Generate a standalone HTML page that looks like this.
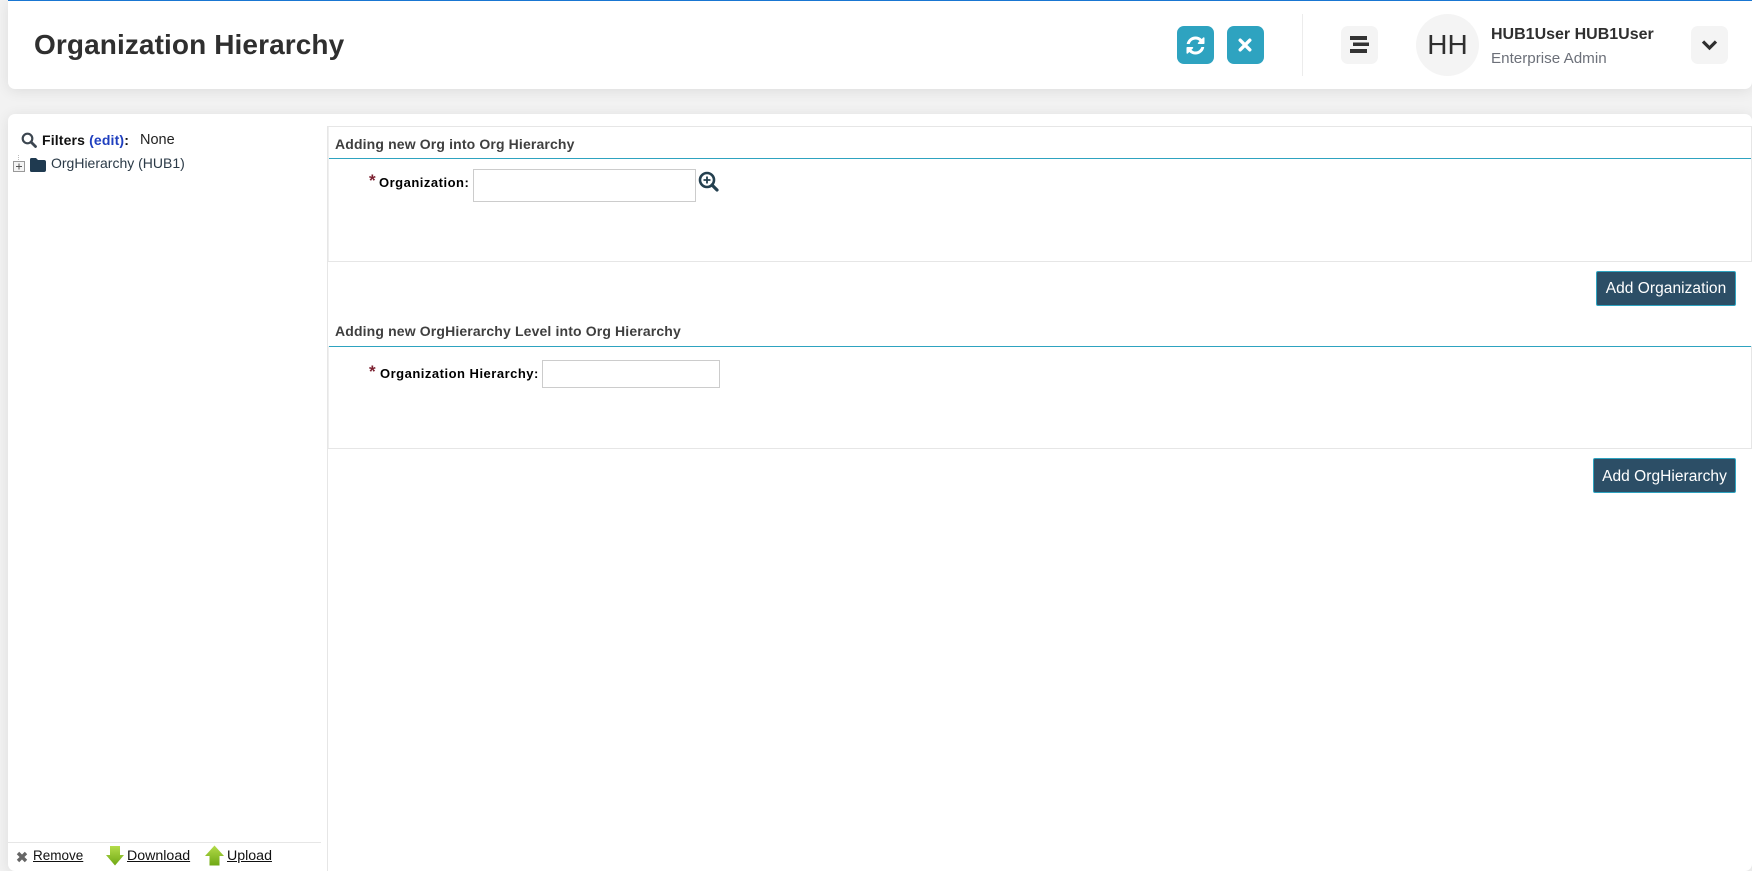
<!DOCTYPE html>
<html><head><meta charset="utf-8"><style>
html,body{margin:0;padding:0;width:1752px;height:871px;overflow:hidden;background:#f2f2f2;font-family:"Liberation Sans",Arial,sans-serif;color:#222}
.a{position:absolute;white-space:nowrap}
.card{position:absolute;background:#fff;box-shadow:0 2px 14px rgba(0,0,0,.09)}
.ln{position:absolute;background:#e6e6e6}
.teal{position:absolute;background:#2ea3c0;height:1px}
.btn{position:absolute;background:#f4f4f4;border-radius:7px;width:37px;height:38px;top:26px}
.tb{background:#2ea3c0}
.hd{font-size:14px;font-weight:bold;color:#3f3f3f;letter-spacing:.14px}
.lab{font-size:13px;font-weight:bold;color:#000;letter-spacing:.5px}
.star{color:#7b1f2f;font-weight:bold;font-size:17px}
.inp{position:absolute;box-sizing:border-box;background:#fff;border:1px solid #ccc}
.sub{position:absolute;box-sizing:border-box;background:#2c4e66;border:1px solid #2ea3c0;border-radius:2px;color:#fff;font-size:15.5px;letter-spacing:.05px;text-align:center;height:35px}
.ft{font-size:14.2px;color:#111;text-decoration:underline}
svg{position:absolute;display:block}
</style></head><body>
<div class="card" style="left:8px;top:0;width:1744px;height:89px;border-radius:0 0 7px 7px"></div>
<div class="a" style="left:8px;top:0;width:1744px;height:1px;background:#1976d2"></div>
<div class="a" style="left:34px;top:28px;font-size:28px;line-height:34px;font-weight:bold;color:#2f2f2f;letter-spacing:.1px">Organization Hierarchy</div>

<div class="btn tb" style="left:1177px"><svg style="left:8px;top:9px" width="21" height="21" viewBox="0 0 1792 1792"><path fill="#fff" d="M1639 1056q0 5-1 7-64 268-268 434.5t-478 166.5q-146 0-282.5-55t-243.500-157l-129 129q-19 19-45 19t-45-19-19-45v-448q0-26 19-45t45-19h448q26 0 45 19t19 45-19 45l-137 137q71 66 161 102t187 36q134 0 250-65t186-179q11-17 53-117 8-23 30-23h192q13 0 22.500 9.500t9.500 22.500zm25-800v448q0 26-19 45t-45 19h-448q-26 0-45-19t-19-45 19-45l138-138q-148-137-349-137-134 0-250 65t-186 179q-11 17-53 117-8 23-30 23h-199q-13 0-22.500-9.500t-9.500-22.500v-7q65-268 270-434.500t480-166.500q146 0 284 55.500t245 156.500l130-129q19-19 45-19t45 19 19 45z"/></svg></div>
<div class="btn tb" style="left:1227px"><svg style="left:11px;top:12px" width="14" height="14" viewBox="0 0 14 14"><path d="M2.200 2.200L11.800 11.800M11.800 2.200L2.200 11.800" stroke="#fff" stroke-width="3.400" stroke-linecap="round"/></svg></div>
<div class="ln" style="left:1302px;top:14px;width:1px;height:62px;background:#ececec"></div>
<div class="btn" style="left:1341px"><svg style="left:9px;top:10px" width="20" height="18" viewBox="0 0 20 18"><rect x="0" y="0" width="17" height="4" fill="#333"/><rect x="3" y="6.500" width="16" height="3.500" fill="#333"/><rect x="0" y="13" width="17" height="4" fill="#333"/></svg></div>
<div class="a" style="left:1416px;top:14px;width:63px;height:62px;border-radius:50%;background:#f4f4f4;text-align:center;line-height:62px;font-size:28px;color:#2f2f2f">HH</div>
<div class="a" style="left:1491px;top:25px;font-size:16px;line-height:20px;font-weight:bold;color:#2f2f2f">HUB1User HUB1User</div>
<div class="a" style="left:1491px;top:49px;font-size:15.200px;line-height:20px;color:#6c7079">Enterprise Admin</div>
<div class="btn" style="left:1691px"><svg style="left:10px;top:13px" width="17" height="12" viewBox="0 0 17 12"><path d="M2 2.500L8.500 9L15 2.500" fill="none" stroke="#2f2f2f" stroke-width="3.200"/></svg></div>

<div class="card" style="left:8px;top:114px;width:1744px;height:757px;border-radius:7px"></div>
<div class="ln" style="left:327px;top:126px;width:1px;height:745px"></div>
<div class="ln" style="left:328px;top:126px;width:1px;height:135px;background:#efefef"></div>
<div class="ln" style="left:328px;top:346px;width:1px;height:102px;background:#efefef"></div>
<div class="ln" style="left:327px;top:126px;width:1425px;height:1px"></div>
<div class="ln" style="left:1751px;top:126px;width:1px;height:135px"></div>
<div class="ln" style="left:1751px;top:346px;width:1px;height:102px"></div>

<svg style="left:21px;top:132px" width="16" height="16" viewBox="0 0 16 16"><circle cx="6.500" cy="6.500" r="4.800" fill="none" stroke="#3c4650" stroke-width="2.200"/><path d="M10 10L14.500 14.500" stroke="#3c4650" stroke-width="2.800" stroke-linecap="round"/></svg>
<div class="a" style="left:42px;top:131px;font-size:14px;line-height:18px;font-weight:bold;color:#111;letter-spacing:.15px">Filters <span style="color:#1f3fbf">(edit)</span>:</div>
<div class="a" style="left:140px;top:131px;font-size:14.500px;line-height:18px;color:#222">None</div>
<svg style="left:12px;top:155px" width="36" height="18" viewBox="0 0 36 18"><path d="M6.500 0V5" stroke="#bbb" stroke-dasharray="1 1"/><rect x="1.500" y="6.500" width="11" height="10" fill="#f4f4f4" stroke="#999"/><path d="M4 11.500H10M7 8.500V14.500" stroke="#555"/><path d="M18 4.500a1.500 1.500 0 0 1 1.500-1.500h4.500l2 2h6a2 2 0 0 1 2 2v8a2 2 0 0 1-2 2H19.500a1.500 1.500 0 0 1-1.500-1.500z" fill="#1f3a50"/></svg>
<div class="a" style="left:51px;top:154px;font-size:14px;line-height:18px;color:#2b3a47">OrgHierarchy (HUB1)</div>

<div class="a hd" style="left:335px;top:135px;line-height:18px">Adding new Org into Org Hierarchy</div>
<div class="teal" style="left:329px;top:158px;width:1422px"></div>
<div class="a star" style="left:369px;top:172px;line-height:18px">*</div>
<div class="a lab" style="left:379px;top:174px;line-height:18px">Organization:</div>
<div class="inp" style="left:473px;top:169px;width:223px;height:33px"></div>
<svg style="left:698px;top:171px" width="21" height="21" viewBox="0 0 21 21"><circle cx="9" cy="9" r="7" fill="#fff" stroke="#24404f" stroke-width="2.600"/><path d="M14 14L19 19" stroke="#24404f" stroke-width="3.200" stroke-linecap="round"/><path d="M5.500 9H12.500M9 5.500V12.500" stroke="#24404f" stroke-width="1.800"/></svg>
<div class="ln" style="left:327px;top:261px;width:1425px;height:1px"></div>
<div class="sub" style="left:1596px;top:271px;width:140px;line-height:34px">Add Organization</div>

<div class="a hd" style="left:335px;top:322px;line-height:18px">Adding new OrgHierarchy Level into Org Hierarchy</div>
<div class="teal" style="left:329px;top:346px;width:1422px"></div>
<div class="a star" style="left:369px;top:363px;line-height:18px">*</div>
<div class="a lab" style="left:380px;top:365px;line-height:18px">Organization Hierarchy:</div>
<div class="inp" style="left:542px;top:360px;width:178px;height:28px"></div>
<div class="ln" style="left:327px;top:448px;width:1425px;height:1px"></div>
<div class="sub" style="left:1593px;top:458px;width:143px;line-height:35px">Add OrgHierarchy</div>

<div class="ln" style="left:8px;top:842px;width:313px;height:1px"></div>
<svg style="left:16px;top:851px" width="12" height="12" viewBox="0 0 12 12"><path d="M2 2L10 10M10 2L2 10" stroke="#666" stroke-width="3.400"/></svg>
<div class="a ft" style="left:33px;top:847px;line-height:17px;font-size:13.500px">Remove</div>
<svg style="left:106px;top:845px" width="18" height="21" viewBox="0 0 18 21"><defs><linearGradient id="g" x1="0" y1="0" x2="0" y2="1"><stop offset="0" stop-color="#b4dc4a"/><stop offset="1" stop-color="#6fa814"/></linearGradient></defs><path d="M4 1H14V10H18L9 20.500L0 10H4z" fill="url(#g)"/></svg>
<div class="a ft" style="left:127px;top:848px;line-height:17px">Download</div>
<svg style="left:205px;top:845px" width="19" height="21" viewBox="0 0 19 21"><path d="M9.500 .5L19 11H14.500V20.500H4.500V11H0z" fill="url(#g)"/></svg>
<div class="a ft" style="left:227px;top:848px;line-height:17px">Upload</div>
</body></html>
